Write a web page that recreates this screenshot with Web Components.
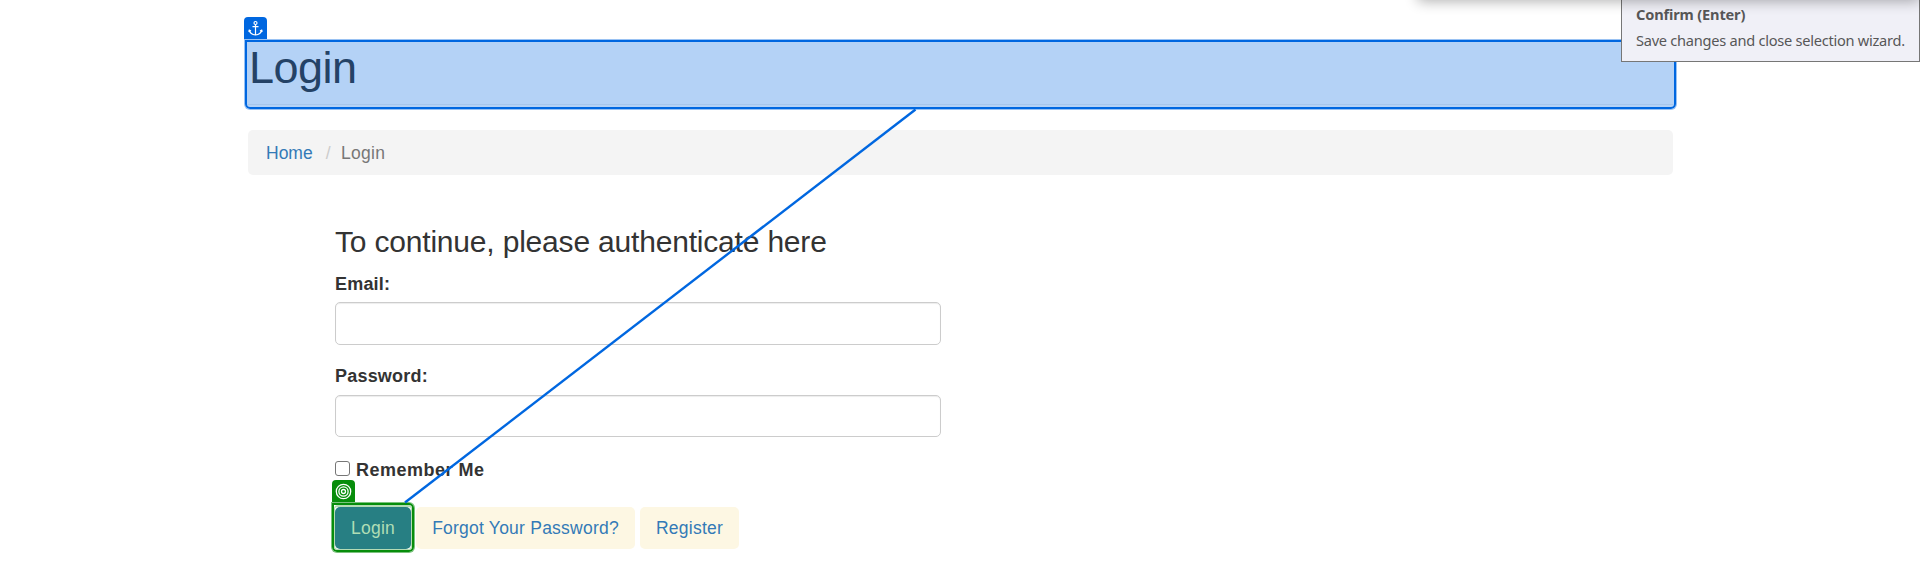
<!DOCTYPE html>
<html lang="en"><head><meta charset="utf-8"><title>Login</title>
<style>html,body{margin:0;background:#fff;overflow:hidden}body{height:572px;font:17.5px/25px "Liberation Sans",Arial,sans-serif;color:#333}</style></head>
<body><login-page></login-page>
<script>
const define=(name,html)=>customElements.define(name,class extends HTMLElement{constructor(){super();this.attachShadow({mode:'open'}).innerHTML=html;}});
define('page-header',`<style>:host{display:block;height:61px;border-bottom:1px solid #eee}h1{margin:0;font-weight:400;font-size:45px;line-height:49.5px;letter-spacing:-.5px;padding-left:1px}</style><h1><slot></slot></h1>`);
define('bread-crumb',`<style>:host{display:flex;box-sizing:border-box;height:45px;padding:11px 18px 9px;background:#f4f4f4;border-radius:5px;color:#777}a{color:#337ab7}i{font-style:normal;color:#ccc;padding:0 10.5px 0 13px}span{letter-spacing:.25px}</style><a>Home</a><i>/</i><span><slot></slot></span>`);
define('form-field',`<style>:host{display:block;height:93px}label{display:block;font-weight:700;font-size:18px;height:30px;padding-top:1px;letter-spacing:.2px}:host([compact]) label{height:31px;padding-top:0}input{display:block;box-sizing:border-box;width:606px;height:43px;margin:0;border:1px solid #ccc;border-radius:5px;outline:0;background:#fff;box-shadow:inset 0 1px 1px rgba(0,0,0,.075)}:host([compact]) input{height:42px}</style><label><slot></slot></label><input>`);
define('remember-me',`<style>:host{display:flex;height:50px;font-weight:700;font-size:18px;letter-spacing:.5px}i{box-sizing:border-box;width:15px;height:15px;margin:4px 6px 0 0;border:1px solid #767676;border-radius:3px;background:#fff}span{padding-top:1px}</style><i></i><span><slot></slot></span>`);
define('link-button',`<style>:host{display:block;box-sizing:border-box;height:42px;padding:9px 0 8px;text-align:center;letter-spacing:.23px;border-radius:5px;background:#fdf7e3;color:#337ab7;white-space:nowrap}:host([primary]){background:#277f83;color:#b0deb5}</style><slot></slot>`);
define('selection-box',`<style>:host{position:absolute;box-sizing:border-box;border:2px solid var(--c);border-radius:0 5px 5px 5px;background:var(--fill,none);box-shadow:0 0 0 1px var(--halo)}
.b{position:absolute;left:var(--bx,-3px);top:-25px;width:23px;height:22px;border-radius:4px 4px 0 0;background:var(--c);display:grid;place-items:center}</style><div class="b"><slot></slot></div>`);
define('tool-tip',`<style>:host{position:absolute;left:1621px;top:-8px;width:299px;height:70px;box-sizing:border-box;border:1px solid #767676;background:#f0f0f7;color:#575757;padding:11px 14px;font:14.6px/20px "Noto Sans","Open Sans",sans-serif;white-space:nowrap}
b{display:block;height:26px;letter-spacing:-.16px}span{display:block;letter-spacing:-.26px}</style><b><slot name="title"></slot></b><span><slot></slot></span>`);
define('login-page',`<style>:host{display:block;position:relative;height:572px;overflow:hidden}
main{width:1425px;padding:43px 0 0 248px}bread-crumb{margin-top:25px}
form{padding:50px 0 0 87px}h3{font-weight:400;font-size:30px;line-height:33px;letter-spacing:-.19px;margin:0 0 13px;white-space:nowrap}
.row{display:flex;gap:5px}.login{width:76px}.forgot{width:219px}.register{width:99px}
.bar{position:absolute;left:1418px;top:-20px;width:502px;height:20px;background:#eee;box-shadow:0 1px 14px rgba(0,0,0,.33)}
.line{position:absolute;left:0;top:0;pointer-events:none}
.anchor{left:245px;top:40px;width:1431px;height:69px;--c:#0067e0;--halo:#0067e066;--fill:rgba(0,103,224,.295)}
.target{left:332px;top:503px;width:82px;height:49px;--c:#078d0b;--halo:#078d0b88;--bx:-2px}
.pad{position:absolute;left:334px;top:505px;width:78px;height:45px;box-sizing:border-box;border:2px solid #b4dcb5;border-width:2px 1px 1px;border-radius:4px}
svg{display:block}</style>
<main><page-header>Login</page-header><bread-crumb>Login</bread-crumb>
<form><h3>To continue, please authenticate here</h3><form-field>Email:</form-field><form-field compact>Password:</form-field><remember-me>Remember Me</remember-me>
<div class="row"><link-button class="login" primary>Login</link-button><link-button class="forgot">Forgot Your Password?</link-button><link-button class="register">Register</link-button></div></form></main>
<selection-box class="anchor"><svg width="15" height="17" viewBox="0 0 15 17" fill="none" stroke="#fff" stroke-width="1.2"><circle cx="7.500" cy="3" r="1.500"/><path d="M7.500 4.500V15M4.500 6.600h6M1.300 10.400c.6 2.600 3 4.200 6.200 4.600 3.200-.4 5.600-2 6.200-4.600M.7 11.800l.6-1.700 1.700.9M14.300 11.800l-.6-1.700-1.700.9"/></svg></selection-box>
<div class="pad"></div>
<selection-box class="target"><svg width="17" height="17" viewBox="0 0 17 17" fill="none" stroke="#fff" stroke-width="1.300"><circle cx="8.500" cy="8.500" r="7.200"/><circle cx="8.500" cy="8.500" r="4.600"/><circle cx="8.500" cy="8.500" r="2"/></svg></selection-box>
<svg class="line" width="1920" height="572"><path d="M915.500 109.500L405 502.500" stroke="#0067e0" stroke-width="2.400"/></svg>
<tool-tip><span slot="title">Confirm (Enter)</span>Save changes and close selection wizard.</tool-tip><div class="bar"></div>`);
</script></body></html>
